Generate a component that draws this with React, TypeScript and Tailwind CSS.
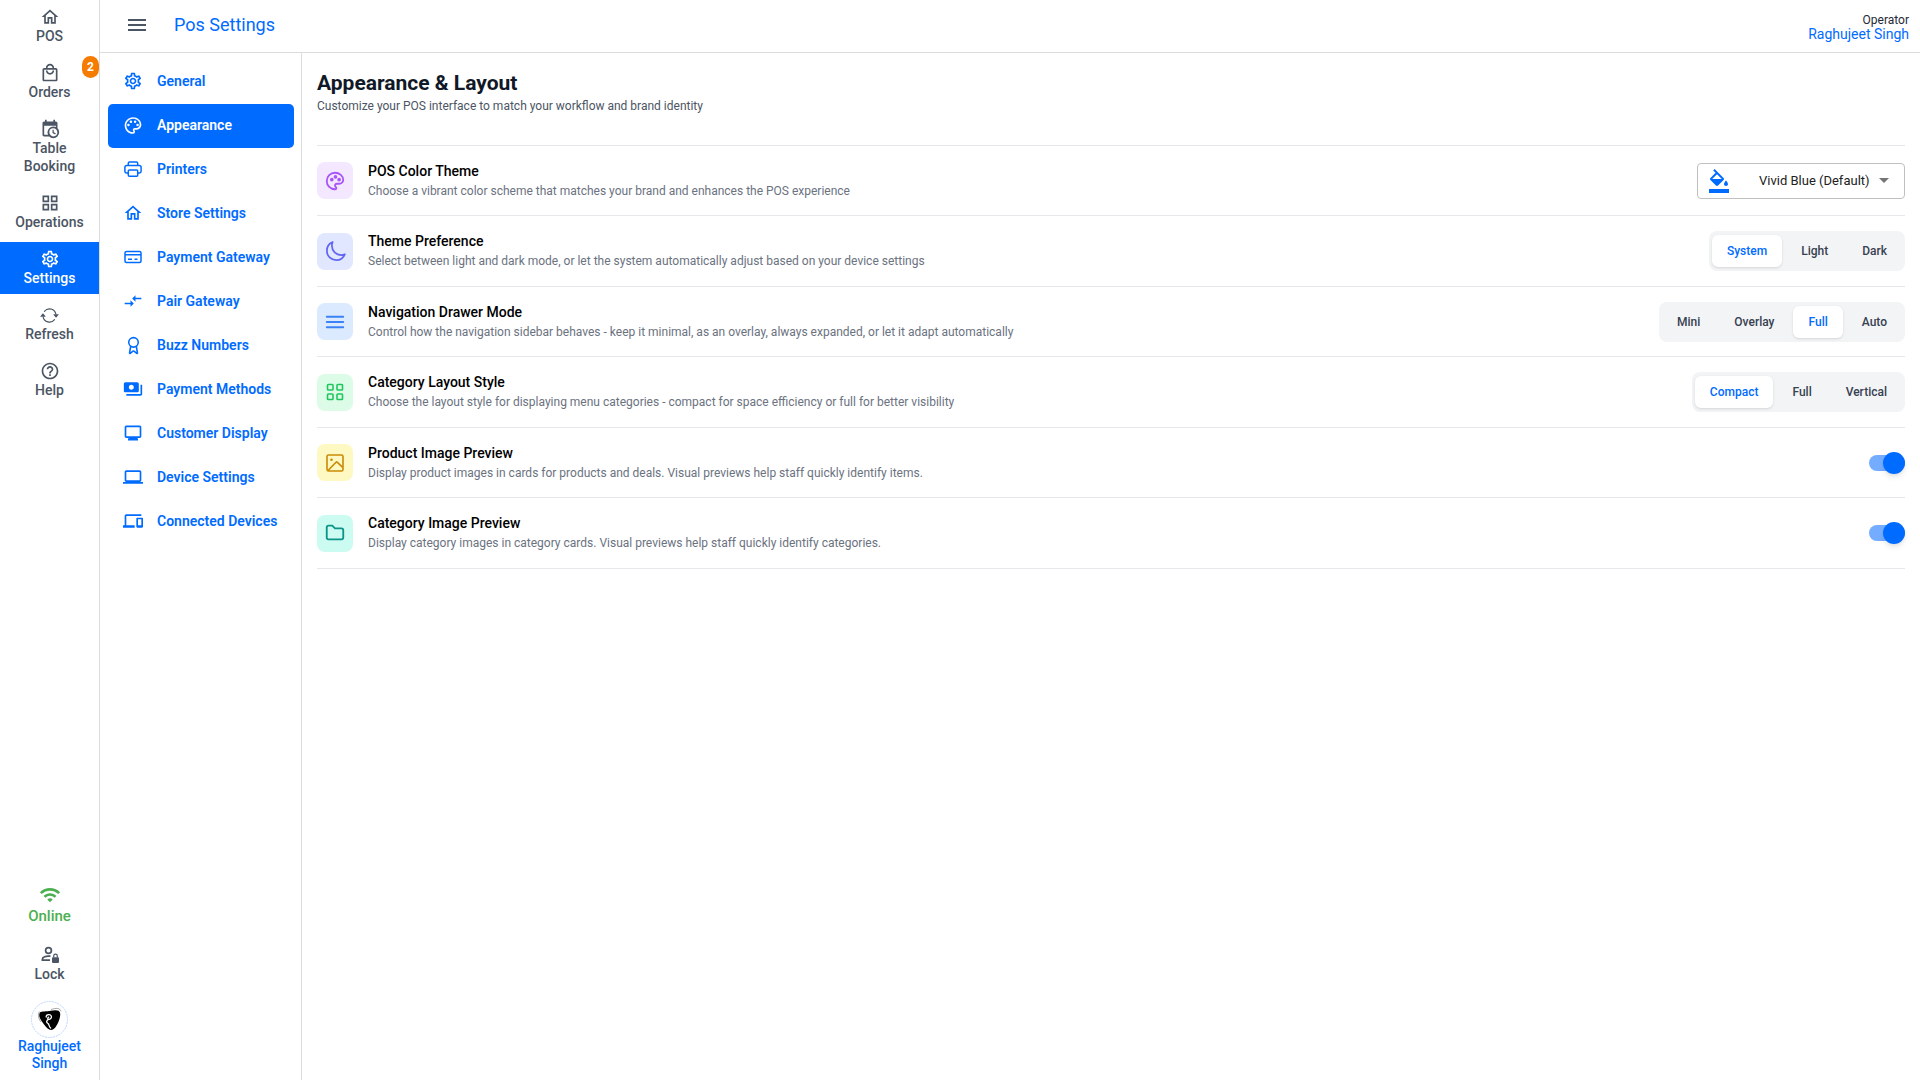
import { useState, type ReactNode } from 'react';
import {
  MdCompareArrows,
  MdDevices,
  MdFormatColorFill,
  MdHelpOutline,
  MdLaptop,
  MdMenu,
  MdMonitor,
  MdOutlineGridView,
  MdOutlineHome,
  MdOutlineLocalMall,
  MdOutlinePalette,
  MdOutlineSettings,
  MdPayments,
  MdWifi,
} from 'react-icons/md';
import { BsArrowRepeat } from 'react-icons/bs';
import { LuAward } from 'react-icons/lu';
import { HiOutlineBars3, HiOutlineMoon } from 'react-icons/hi2';
import { TbFolder, TbPalette } from 'react-icons/tb';

function CalendarClockIcon() {
  return (
    <svg width="20" height="20" viewBox="0 0 24 24" fill="currentColor" aria-hidden="true">
      <path d="M15,13H16.5V15.82L18.94,17.23L18.19,18.53L15,16.69V13M19,8H5V19H9.67C9.24,18.09 9,17.07 9,16A7,7 0 0,1 16,9C17.07,9 18.09,9.24 19,9.67V8M5,21C3.89,21 3,20.1 3,19V5C3,3.89 3.89,3 5,3H6V1H8V3H16V1H18V3H19A2,2 0 0,1 21,5V11.1C22.24,12.36 23,14.09 23,16A7,7 0 0,1 16,23C14.09,23 12.36,22.24 11.1,21H5M16,11.15A4.85,4.85 0 0,0 11.15,16C11.15,18.68 13.32,20.85 16,20.85A4.85,4.85 0 0,0 20.85,16C20.85,13.32 18.68,11.15 16,11.15Z" />
    </svg>
  );
}

function UserLockIcon() {
  return (
    <svg width="20" height="20" viewBox="0 0 20 20" fill="none" aria-hidden="true">
      <circle cx="8.5" cy="5.5" r="2.9" stroke="currentColor" strokeWidth="1.7" />
      <path d="M10.500 11.200C5.500 10.600 2.400 12.200 2.400 14.200v.9H10" stroke="currentColor" strokeWidth="1.7" />
      <rect x="12" y="12.2" width="7" height="5.8" rx="1" fill="currentColor" />
      <path d="M13.7 12.5v-1.600a1.800 1.800 0 0 1 3.600 0v1.600" stroke="currentColor" strokeWidth="1.2" />
    </svg>
  );
}

function PrinterIcon() {
  return (
    <svg width="20" height="20" viewBox="0 0 20 20" fill="none" stroke="currentColor" strokeWidth="1.5" strokeLinejoin="round" aria-hidden="true">
      <path d="M5.3 6.6V4.2c0-.8.5-1.300 1.300-1.300h6.800c.8 0 1.300.5 1.300 1.300v2.400" />
      <path d="M5.2 13.9H3.6c-1 0-1.700-.7-1.700-1.700V8.5c0-1.100.8-1.900 1.900-1.900h12.400c1.100 0 1.900.8 1.900 1.900v3.700c0 1-.7 1.700-1.700 1.700h-1.600" />
      <rect x="5.3" y="11" width="9.4" height="6.2" rx="1" />
    </svg>
  );
}

function CardIcon() {
  return (
    <svg width="20" height="20" viewBox="0 0 20 20" fill="none" stroke="currentColor" strokeWidth="1.5" aria-hidden="true">
      <rect x="2" y="4.5" width="16" height="11" rx="1.5" />
      <path d="M2 7.7h16M5 12.3h4M11.5 12.3h3" />
    </svg>
  );
}

function GridIcon() {
  return (
    <svg width="20" height="20" viewBox="0 0 20 20" fill="none" stroke="currentColor" strokeWidth="1.6" aria-hidden="true">
      <rect x="2.5" y="2.5" width="5.5" height="5.5" rx="0.8" />
      <rect x="12" y="2.5" width="5.5" height="5.5" rx="0.8" />
      <rect x="2.5" y="12" width="5.5" height="5.5" rx="0.8" />
      <rect x="12" y="12" width="5.5" height="5.5" rx="0.8" />
    </svg>
  );
}

function ImageIcon() {
  return (
    <svg width="24" height="24" viewBox="0 0 24 24" fill="none" stroke="currentColor" strokeWidth="1.6" strokeLinejoin="round" aria-hidden="true">
      <rect x="4" y="4" width="16" height="16" rx="1.5" />
      <path d="M5 19.5l8-8.200c.5-.5.9-.5 1.400 0l5.300 5" />
      <circle cx="8.5" cy="8.7" r="1.3" fill="currentColor" stroke="none" />
    </svg>
  );
}

function AvatarMark() {
  return (
    <svg width="37" height="37" viewBox="0 0 37 37" fill="none" aria-hidden="true">
      <circle cx="18.5" cy="18.5" r="18" stroke="#b3d0ff" strokeWidth="0.9" strokeDasharray="2 0.8" />
      <path d="M8.500 12.500c-1 3 .8 6 4 10.200 3.200 4.300 6 7.400 9.400 5.900 3.500-1.500 8.200-11.900 7.200-16.600-.8-4-6.600-2.600-10.800-1.900-4.700.7-9-.2-9.800 2.400Z" fill="#000" />
      <path d="M15.200 16c-.3-2.700 4.900-3.600 5.200-.4.200 2-1.600 3.100-2.900 2.700-1.200-.4-.8-2 .2-2.100M17.400 18.400c-2 .9-2.300 3-.6 3.900 1.700.8.800 3.200 2.800 4.700" stroke="#fff" strokeWidth="1.3" strokeLinecap="round" />
      <path d="M8.400 10.500c-1.900 3-1 7 1.600 10.500M20 8.600c5-1.900 9.300-1.600 9.900 1.700" stroke="#555" strokeWidth="0.5" />
    </svg>
  );
}

const railItems: { label: string; icon: ReactNode; badge?: string }[] = [
  { label: 'POS', icon: <MdOutlineHome size={20} /> },
  { label: 'Orders', icon: <MdOutlineLocalMall size={20} />, badge: '2' },
  { label: 'Table Booking', icon: <CalendarClockIcon /> },
  { label: 'Operations', icon: <MdOutlineGridView size={20} /> },
  { label: 'Settings', icon: <MdOutlineSettings size={20} /> },
  { label: 'Refresh', icon: <BsArrowRepeat size={19} /> },
  { label: 'Help', icon: <MdHelpOutline size={20} /> },
];

const sections: { label: string; icon: ReactNode }[] = [
  { label: 'General', icon: <MdOutlineSettings size={20} /> },
  { label: 'Appearance', icon: <MdOutlinePalette size={21} /> },
  { label: 'Printers', icon: <PrinterIcon /> },
  { label: 'Store Settings', icon: <MdOutlineHome size={20} /> },
  { label: 'Payment Gateway', icon: <CardIcon /> },
  { label: 'Pair Gateway', icon: <MdCompareArrows size={20} /> },
  { label: 'Buzz Numbers', icon: <LuAward size={19} /> },
  { label: 'Payment Methods', icon: <MdPayments size={20} /> },
  { label: 'Customer Display', icon: <MdMonitor size={20} /> },
  { label: 'Device Settings', icon: <MdLaptop size={20} /> },
  { label: 'Connected Devices', icon: <MdDevices size={20} /> },
];

function Row({ icon, tile, title, text, children }: { icon: ReactNode; tile: string; title: string; text: string; children: ReactNode }) {
  return (
    <li className="flex h-[70px] items-center border-b border-[#e5e7eb] even:h-[71px]">
      <span className={`flex h-[37px] w-9 shrink-0 items-center justify-center rounded-lg ${tile}`}>{icon}</span>
      <div className="ml-[15px] flex-1">
        <h2 className="text-[14px] leading-5 font-medium text-black">{title}</h2>
        <p className="text-[12px] leading-5 text-[#6b7280]">{text}</p>
      </div>
      {children}
    </li>
  );
}

function Segments({ label, options, initial }: { label: string; options: string[]; initial: string }) {
  const [value, setValue] = useState(initial);
  return (
    <div role="group" aria-label={label} className="flex gap-1 rounded-lg bg-[#f3f4f6] px-[3px] py-1">
      {options.map((option) => (
        <button
          key={option}
          type="button"
          aria-pressed={option === value}
          onClick={() => setValue(option)}
          className="rounded-md px-[15px] py-2 text-[12px] leading-4 font-medium text-[#374151] aria-pressed:bg-white aria-pressed:text-[#006bff] aria-pressed:shadow-sm"
        >
          {option}
        </button>
      ))}
    </div>
  );
}

function Toggle({ label }: { label: string }) {
  return (
    <label className="relative flex h-[22px] w-9 items-center">
      <input type="checkbox" role="switch" aria-label={label} defaultChecked className="peer sr-only" />
      <span className="h-4 w-full rounded-full bg-gray-300 peer-checked:bg-[#74acff]" />
      <span className="absolute left-0 size-[22px] rounded-full bg-white shadow-md peer-checked:right-0 peer-checked:left-auto peer-checked:bg-[#006bff]" />
    </label>
  );
}

export default function App() {
  return (
    <div className="flex min-h-screen bg-white font-[Roboto,sans-serif] text-[#1f2937]">
      <nav aria-label="Main" className="flex w-[100px] shrink-0 flex-col border-r border-[#dcdcdc] text-center text-[14px] leading-[18px] font-medium text-[#4b5563]">
        <ul className="flex flex-col gap-1">
          {railItems.map((item) => (
            <li key={item.label} className="relative">
              <a
                href="#"
                aria-current={item.label === 'Settings' ? 'page' : undefined}
                className="flex flex-col items-center px-4 py-[7px] aria-[current=page]:bg-[#006bff] aria-[current=page]:text-white"
              >
                <span className="flex size-5 items-center justify-center">{item.icon}</span>
                {item.label}
              </a>
              {item.badge && (
                <span className="absolute top-0 right-0 flex h-[22px] w-[17px] items-center justify-center rounded-full bg-[#f57c00] text-[12px] font-bold text-white">
                  {item.badge}
                </span>
              )}
            </li>
          ))}
        </ul>
        <div className="mt-auto flex flex-col items-center pb-2">
          <p className="flex flex-col items-center text-[15px] leading-5 text-[#4caf50]">
            <MdWifi size={22} />
            Online
          </p>
          <button type="button" className="mt-[19px] flex flex-col items-center">
            <UserLockIcon />
            Lock
          </button>
          <a href="#" className="mt-[18px] flex flex-col items-center px-3 leading-[17px] text-[#006bff]">
            <AvatarMark />
            Raghujeet Singh
          </a>
        </div>
      </nav>

      <div className="flex flex-1 flex-col">
        <header className="flex h-[53px] items-center border-b border-[#dcdcdc] pr-[11px] pb-0.5 pl-[25px]">
          <button type="button" aria-label="Toggle menu" className="text-[#4b5563]">
            <MdMenu size={24} />
          </button>
          <h1 className="ml-[25px] flex-1 text-[18px] leading-6 text-[#006bff]">Pos Settings</h1>
          <div className="pt-1 text-right">
            <p className="text-[12px] leading-[14px]">Operator</p>
            <p className="text-[14px] leading-[14px] text-[#006bff]">Raghujeet Singh</p>
          </div>
        </header>

        <div className="flex flex-1">
          <nav aria-label="Settings sections" className="w-[202px] shrink-0 border-r border-[#dcdcdc] pt-[7px] pr-[7px] pl-2">
            {sections.map((section) => (
              <a
                key={section.label}
                href="#"
                aria-current={section.label === 'Appearance' ? 'page' : undefined}
                className="flex h-11 items-center gap-3.5 rounded-[5px] pb-0.5 pl-[15px] text-[14px] font-semibold text-[#006bff] aria-[current=page]:bg-[#006bff] aria-[current=page]:text-white"
              >
                <span className="flex size-5 items-center justify-center">{section.icon}</span>
                {section.label}
              </a>
            ))}
          </nav>

          <main className="flex-1 px-[15px] pt-4">
            <h1 className="text-[21px] leading-7 font-bold text-[#111827]">Appearance &amp; Layout</h1>
            <p className="text-[12px] leading-[18px] text-[#4b5563]">Customize your POS interface to match your workflow and brand identity</p>
            <ul className="mt-[30px] border-t border-[#e5e7eb]">
              <Row icon={<TbPalette size={22} />} tile="bg-[#f3e8ff] text-[#a855f7]" title="POS Color Theme" text="Choose a vibrant color scheme that matches your brand and enhances the POS experience">
                <div className="relative flex w-[208px] items-center">
                  <MdFormatColorFill size={24} className="pointer-events-none absolute left-2.5 text-[#006bff]" />
                  <select aria-label="POS Color Theme" className="h-9 w-full appearance-none rounded border border-[#c0c0c0] bg-transparent pr-7 pl-[61px] text-[13px] text-[#212121]">
                    <option>Vivid Blue (Default)</option>
                  </select>
                  <svg width="10" height="5" viewBox="0 0 10 5" className="pointer-events-none absolute right-4 text-[#757575]" aria-hidden="true">
                    <path d="M0 0h10L5 5z" fill="currentColor" />
                  </svg>
                </div>
              </Row>
              <Row icon={<HiOutlineMoon size={23} strokeWidth={1.8} />} tile="bg-[#e0e7ff] text-[#6366f1]" title="Theme Preference" text="Select between light and dark mode, or let the system automatically adjust based on your device settings">
                <Segments label="Theme Preference" options={['System', 'Light', 'Dark']} initial="System" />
              </Row>
              <Row icon={<HiOutlineBars3 size={24} strokeWidth={1.8} />} tile="bg-[#dbeafe] text-[#3b82f6]" title="Navigation Drawer Mode" text="Control how the navigation sidebar behaves - keep it minimal, as an overlay, always expanded, or let it adapt automatically">
                <Segments label="Navigation Drawer Mode" options={['Mini', 'Overlay', 'Full', 'Auto']} initial="Full" />
              </Row>
              <Row icon={<GridIcon />} tile="bg-[#dcfce7] text-[#22c55e]" title="Category Layout Style" text="Choose the layout style for displaying menu categories - compact for space efficiency or full for better visibility">
                <Segments label="Category Layout Style" options={['Compact', 'Full', 'Vertical']} initial="Compact" />
              </Row>
              <Row icon={<ImageIcon />} tile="bg-[#fef9c3] text-[#ca8a04]" title="Product Image Preview" text="Display product images in cards for products and deals. Visual previews help staff quickly identify items.">
                <Toggle label="Product Image Preview" />
              </Row>
              <Row icon={<TbFolder size={22} />} tile="bg-[#ccfbf1] text-[#0d9488]" title="Category Image Preview" text="Display category images in category cards. Visual previews help staff quickly identify categories.">
                <Toggle label="Category Image Preview" />
              </Row>
            </ul>
          </main>
        </div>
      </div>
    </div>
  );
}
